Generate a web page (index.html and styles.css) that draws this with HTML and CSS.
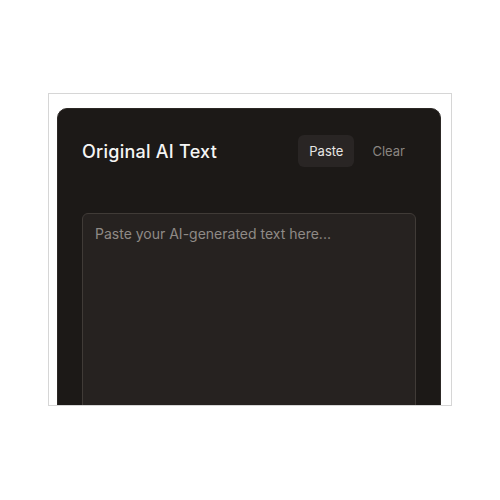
FILE: index.html
```html
<!DOCTYPE html>
<html lang="en">
<head>
    <meta charset="UTF-8">
    <meta name="viewport" content="width=device-width, initial-scale=1.0">
    <title>Original AI Text</title>
    <link rel="stylesheet" href="styles.css">
</head>
<body>
    <div class="frame">
        <section class="panel">
            <div class="panel-head">
                <h2>Original AI Text</h2>
                <div class="actions">
                    <button class="btn btn-paste">Paste</button>
                    <button class="btn btn-clear">Clear</button>
                </div>
            </div>
            <textarea id="source-text" placeholder="Paste your AI-generated text here..."></textarea>
        </section>
    </div>
</body>
</html>
```

FILE: styles.css
```css
body {
    margin: 0;
    background-color: #fff;
    font-family: Inter, "Noto Sans", sans-serif;
}

.frame {
    box-sizing: border-box;
    width: 404px;
    height: 313px;
    margin: 93px 0 0 48px;
    padding: 14px 10px 0 8px;
    border: 1px solid #d6d6d6;
    overflow: hidden;
}

.panel {
    box-sizing: border-box;
    width: 384px;
    height: 420px;
    padding: 24px;
    background-color: #1c1917;
    border: 1px solid #2c2825;
    border-radius: 10px;
}

.panel-head {
    display: flex;
    justify-content: space-between;
    align-items: center;
    height: 36px;
    margin-bottom: 44px;
}

.panel-head h2 {
    margin: 0;
    font-size: 18px;
    font-weight: 500;
    color: #f5f5f4;
    letter-spacing: 0.25px;
}

.actions {
    display: flex;
    gap: 7px;
}

.btn {
    height: 32px;
    padding: 0 11px;
    border: none;
    border-radius: 6px;
    font-family: inherit;
    font-size: 13px;
    background: none;
    cursor: pointer;
}

.btn-paste {
    background-color: #292524;
    color: #e7e5e4;
}

.btn-clear {
    color: #8a8581;
}

#source-text {
    box-sizing: border-box;
    display: block;
    width: 100%;
    height: 300px;
    padding: 10px 12px;
    background-color: #262220;
    color: #e7e5e4;
    border: 1px solid #403b37;
    border-radius: 6px;
    font-family: inherit;
    font-size: 14px;
    line-height: 20px;
    resize: none;
    outline: none;
}

#source-text::placeholder {
    color: #8f8a86;
}
```
